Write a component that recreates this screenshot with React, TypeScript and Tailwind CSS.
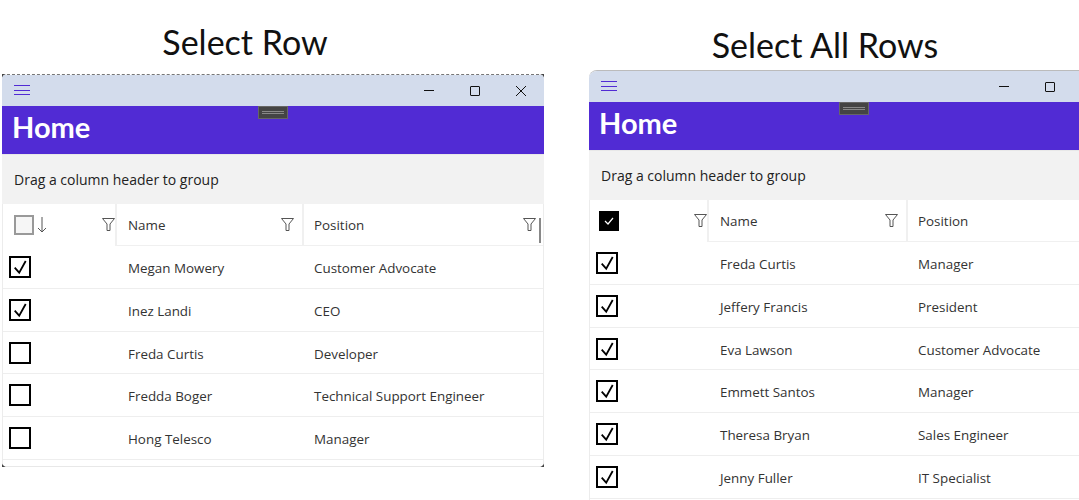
import clsx from 'clsx';

type Row = { name: string; position: string; checked: boolean };

const leftRows: Row[] = [
  { name: 'Megan Mowery', position: 'Customer Advocate', checked: true },
  { name: 'Inez Landi', position: 'CEO', checked: true },
  { name: 'Freda Curtis', position: 'Developer', checked: false },
  { name: 'Fredda Boger', position: 'Technical Support Engineer', checked: false },
  { name: 'Hong Telesco', position: 'Manager', checked: false },
];

const rightRows: Row[] = [
  { name: 'Freda Curtis', position: 'Manager', checked: true },
  { name: 'Jeffery Francis', position: 'President', checked: true },
  { name: 'Eva Lawson', position: 'Customer Advocate', checked: true },
  { name: 'Emmett Santos', position: 'Manager', checked: true },
  { name: 'Theresa Bryan', position: 'Sales Engineer', checked: true },
  { name: 'Jenny Fuller', position: 'IT Specialist', checked: true },
];

function FilterIcon() {
  return (
    <svg width="13" height="13" viewBox="0 0 13 13" fill="none" stroke="#555" strokeWidth="1" className="shrink-0">
      <path d="M0.5 0.5H12.5L8 6V12.5H5V6Z" />
    </svg>
  );
}

function RowCheck({ checked }: { checked: boolean }) {
  return (
    <div className="w-[22px] h-[22px] border-2 border-black bg-white">
      {checked && (
        <svg width="18" height="18" viewBox="0 0 18 18" fill="none" stroke="#000" strokeWidth="1.8">
          <path d="M3.7 9.7L8.2 14.7L14.7 3" />
        </svg>
      )}
    </div>
  );
}

function GridWindow({
  rows, selectAll, firstCol, nameCol, rounded,
}: {
  rows: Row[];
  selectAll: boolean;
  firstCol: string;
  nameCol: string;
  rounded: boolean;
}) {
  return (
    <div className={clsx('relative overflow-hidden', rounded ? 'h-[430px] w-[530px] shrink-0' : 'h-[393px] w-[542px] bg-[#444]')}>
      <div
        className={clsx(
          'h-full bg-white flex flex-col overflow-hidden',
          rounded ? 'rounded-t-[8px] border-t border-[#bbbbbb]' : 'rounded-[5px]',
        )}
      >
        {/* Title bar */}
        {!rounded && <div className="h-px shrink-0 border-t border-dashed border-[#777]" />}
        <div className="flex items-center bg-[#d3dcec] pl-[12px] shrink-0 h-[31px]">
          <svg width="16" height="11" viewBox="0 0 16 11" stroke="#512bd4" strokeWidth="1">
            <path d="M0 0.5H16M0 5.5H16M0 9.5H16" />
          </svg>
          <div className="ml-auto flex items-center gap-[36px] pr-[18px]">
            <div className="w-[10px] h-px bg-[#111]" />
            <div className="w-[10px] h-[10px] border border-[#111] rounded-[1px]" />
            <svg width="10" height="10" viewBox="0 0 10 10" stroke="#111" strokeWidth="1">
              <path d="M0 0L10 10M10 0L0 10" />
            </svg>
          </div>
        </div>

        {/* Page header */}
        <div className="h-[48px] bg-[#512bd4] shrink-0 pl-[10px] flex items-start">
          <span className="text-white text-[29px] leading-[42px] font-bold font-['Lato',sans-serif]">Home</span>
        </div>

        <div className="h-[50px] bg-[#f2f2f2] border-t border-[#e8e8e8] shrink-0 flex items-center pl-[12px] text-[14px] text-[#222] font-['Open_Sans',sans-serif]">
          Drag a column header to group
        </div>

        {/* Grid */}
        <div className="flex-1 border-x border-[#ececec] font-['Open_Sans',sans-serif] text-[13.4px] text-[#333]">
          <div className="flex h-[42px] bg-white">
            <div className={clsx('flex items-center shrink-0', firstCol, selectAll ? 'pl-[9px]' : 'pl-[11px]')}>
              {selectAll ? (
                <div className="w-[20px] h-[20px] bg-black flex items-center justify-center">
                  <svg width="10" height="8" viewBox="0 0 10 8" fill="none" stroke="#fff" strokeWidth="1.2">
                    <path d="M1 4L4 7L9 1" />
                  </svg>
                </div>
              ) : (
                <>
                  <div className="w-[20px] h-[20px] border-2 border-[#999] bg-[#f6f6f6]" />
                  <svg width="10" height="16" viewBox="0 0 10 16" fill="none" stroke="#555" strokeWidth="1" className="ml-[3px]">
                    <path d="M5 0V15M1 11L5 15L9 11" />
                  </svg>
                </>
              )}
              <div className="ml-auto mb-[1px]">
                <FilterIcon />
              </div>
            </div>
            <div className={clsx('flex items-center shrink-0 pl-[11px] pr-[8px] border-l-2 border-b border-[#f0f0f0]', nameCol)}>
              <span className="mt-[2px]">Name</span>
              <div className="ml-auto mb-[1px]">
                <FilterIcon />
              </div>
            </div>
            <div className="flex-1 flex items-center pl-[10px] pr-[7px] border-l-2 border-b border-[#f0f0f0]">
              <span className="mt-[2px]">Position</span>
              <div className="ml-auto mb-[1px]">
                <FilterIcon />
              </div>
            </div>
          </div>
          {rows.map((row) => (
            <div key={row.name} className="flex items-center h-[42.83px] border-b border-[#eeeeee]">
              <div className={clsx('shrink-0 pl-[6px]', firstCol)}>
                <RowCheck checked={row.checked} />
              </div>
              <div className={clsx('shrink-0 pl-[13px] mt-[2px]', nameCol)}>{row.name}</div>
              <div className="flex-1 pl-[12px] mt-[2px]">{row.position}</div>
            </div>
          ))}
        </div>
        {!rounded && <div className="h-px shrink-0 bg-[#e8e8e8]" />}
      </div>

      {/* Window resize grip */}
      <div className={clsx('absolute top-[32px] w-[30px] h-[13px] bg-[#444] border border-[#666] flex flex-col justify-center gap-px px-[3px]', rounded ? 'left-[250px]' : 'left-[256px]')}>
        <div className="h-px bg-[#888]" />
        <div className="h-px bg-[#888]" />
      </div>
      {!rounded && <div className="absolute right-[3px] top-[144px] w-[2px] h-[25px] bg-[#888]" />}
    </div>
  );
}

export default function App() {
  return (
    <div className="h-[500px] w-[1079px] bg-white overflow-hidden flex">
      <div className="ml-[2px] w-[542px] shrink-0">
        <div className="h-[74px] pt-[19px] w-[486px] text-center text-[34px] leading-[46px] text-[#111] font-['Lato',sans-serif]">
          Select Row
        </div>
        <GridWindow rows={leftRows} selectAll={false} firstCol="w-[112px]" nameCol="w-[187px]" rounded={false} />
      </div>
      <div className="ml-[45px] w-[530px] shrink-0">
        <div className="h-[70px] pt-[22px] w-[472px] text-center text-[34px] leading-[46px] text-[#111] font-['Lato',sans-serif]">
          Select All Rows
        </div>
        <GridWindow rows={rightRows} selectAll firstCol="w-[117px]" nameCol="w-[199px]" rounded />
      </div>
    </div>
  );
}
